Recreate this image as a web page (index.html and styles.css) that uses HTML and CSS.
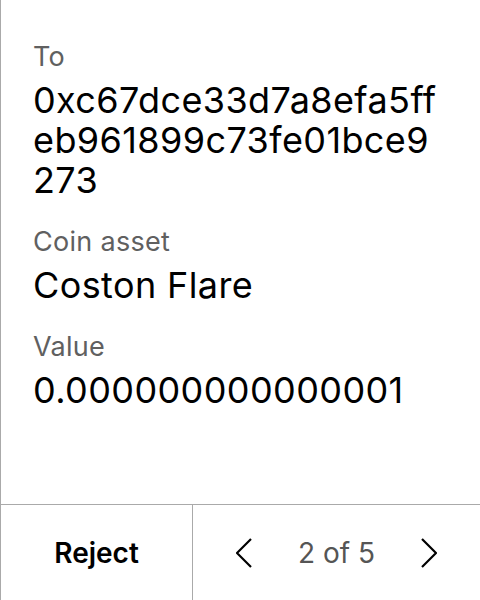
FILE: index.html
```html
<!DOCTYPE html>
<html>
<head>
<meta charset="utf-8">
<link rel="stylesheet" href="styles.css">
</head>
<body>
<div class="screen">
  <div class="content">
    <div class="field">
      <div class="label">To</div>
      <div class="value">0xc67dce33d7a8efa5ff<br>eb961899c73fe01bce9<br>273</div>
    </div>
    <div class="field">
      <div class="label">Coin asset</div>
      <div class="value">Coston Flare</div>
    </div>
    <div class="field">
      <div class="label">Value</div>
      <div class="value">0.000000000000001</div>
    </div>
  </div>
  <div class="footer">
    <div class="reject">Reject</div>
    <div class="pager">
      <svg class="chev" width="16" height="30" viewBox="0 0 16 30"><path d="M15 1 L1 15 L15 29" fill="none" stroke="#000" stroke-width="2.2"/></svg>
      <span class="count">2 of 5</span>
      <svg class="chev" width="16" height="30" viewBox="0 0 16 30"><path d="M1 1 L15 15 L1 29" fill="none" stroke="#000" stroke-width="2.2"/></svg>
    </div>
  </div>
</div>
</body>
</html>
```
FILE: styles.css
```css
html, body {
  margin: 0;
  padding: 0;
  background: #fff;
}
body {
  font-family: Inter, "Noto Sans", sans-serif;
  color: #000;
}
.screen {
  width: 480px;
  height: 600px;
  box-sizing: border-box;
  border-left: 1px solid #aaa;
  display: flex;
  flex-direction: column;
}
.content {
  flex: 1;
  padding: 39px 0 0 32px;
  display: flex;
  flex-direction: column;
  gap: 24px;
}
.label {
  font-size: 27px;
  line-height: 36px;
  letter-spacing: 0.3px;
  color: #606060;
  margin-bottom: 5px;
}
.value {
  font-size: 36px;
  line-height: 40px;
  letter-spacing: 0.4px;
  color: #000;
}
.footer {
  height: 96px;
  box-sizing: border-box;
  border-top: 1px solid #aaa;
  display: flex;
}
.reject {
  width: 191px;
  border-right: 1px solid #aaa;
  display: flex;
  align-items: center;
  justify-content: center;
  font-size: 28px;
  font-weight: 600;
}
.pager {
  flex: 1;
  display: flex;
  align-items: center;
  justify-content: center;
  gap: 46px;
}
.count {
  font-size: 28px;
  color: #555;
}
.chev {
  display: block;
}
```
